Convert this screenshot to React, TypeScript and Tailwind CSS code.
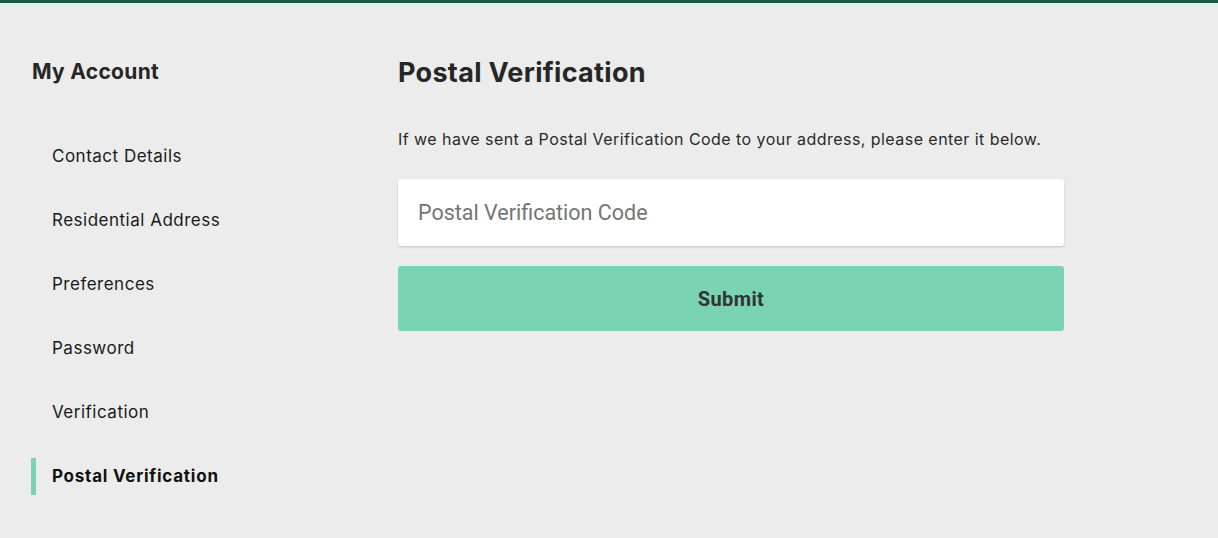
import React from 'react'

const navItems = [
  'Contact Details',
  'Residential Address',
  'Preferences',
  'Password',
  'Verification',
  'Postal Verification',
]

const App = () => {
  const active = 'Postal Verification'

  return (
    <div className="min-h-[538px] bg-[#ebeceb] font-['Inter',sans-serif] text-[#222]">
      <div className="h-[3px] bg-[#1d5a44]" />
      <div className="flex">
        {/* Sidebar */}
        <aside className="w-[398px] shrink-0 pl-[31px] pt-[53px]">
          <h2 className="pl-px text-[21px] font-bold leading-[32px] tracking-[0.3px] text-[#262626]">
            My Account
          </h2>
          <ul className="mt-[50px] flex flex-col gap-[27px]">
            {navItems.map((item) => {
              const isActive = item === active
              return (
                <li
                  key={item}
                  className={
                    isActive
                      ? 'flex h-[37px] items-center border-l-[5px] border-[#7ad4b1] pl-[16px] text-[17px] font-bold tracking-[0.75px] text-[#111]'
                      : 'flex h-[37px] items-center border-l-[5px] border-transparent pl-[16px] text-[17px] tracking-[0.5px] text-[#1a1a1a]'
                  }
                >
                  {item}
                </li>
              )
            })}
          </ul>
        </aside>

        {/* Main */}
        <main className="pt-[53px]">
          <h1 className="text-[27px] font-bold leading-[34px] tracking-[0.3px] text-[#262626]">
            Postal Verification
          </h1>
          <div className="-ml-[20px] mt-[37px] w-[704px] bg-[#ececec] px-[20px] pb-[40px]">
            <p className="text-[16px] leading-[24px] tracking-[0.45px] text-[#2a2a2a]">
              If we have sent a Postal Verification Code to your address, please enter it below.
            </p>
            <input
              type="text"
              placeholder="Postal Verification Code"
              className="mt-[28px] block h-[67px] w-[666px] rounded-[3px] bg-white px-[20px] font-['Roboto',sans-serif] text-[21.5px] text-[#333] shadow-[0_1px_2px_rgba(0,0,0,0.18)] outline-none placeholder:text-[#757575]"
            />
            <button
              type="button"
              className="mt-[20px] block h-[65px] w-[666px] rounded-[3px] bg-[#7ad4b1] font-['Roboto',sans-serif] text-[20px] font-bold tracking-[0.4px] text-[#333]"
            >
              Submit
            </button>
          </div>
        </main>
      </div>
    </div>
  )
}

export default App
